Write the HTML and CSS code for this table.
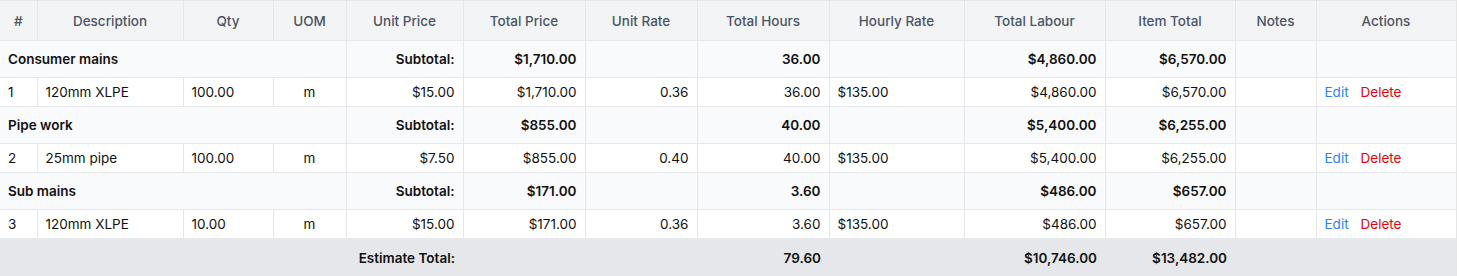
FILE: index.html
```html
<!DOCTYPE html>
<html>
<head>
<meta charset="utf-8">
<link rel="stylesheet" href="styles.css">
</head>
<body>
<div class="wrap">
<table class="est">
<colgroup>
<col class="c1"><col class="c2"><col class="c3"><col class="c4"><col class="c5"><col class="c6"><col class="c7"><col class="c8"><col class="c9"><col class="c10"><col class="c11"><col class="c12"><col class="c13">
</colgroup>
<thead>
<tr>
<th>#</th><th>Description</th><th>Qty</th><th>UOM</th><th>Unit Price</th><th>Total Price</th><th>Unit Rate</th><th>Total Hours</th><th>Hourly Rate</th><th>Total Labour</th><th>Item Total</th><th>Notes</th><th>Actions</th>
</tr>
</thead>
<tbody>
<tr class="group">
<td colspan="4">Consumer mains</td><td class="r">Subtotal:</td><td class="r">$1,710.00</td><td></td><td class="r">36.00</td><td></td><td class="r">$4,860.00</td><td class="r">$6,570.00</td><td></td><td></td>
</tr>
<tr class="item">
<td>1</td><td>120mm XLPE</td><td>100.00</td><td class="c">m</td><td class="r">$15.00</td><td class="r">$1,710.00</td><td class="r">0.36</td><td class="r">36.00</td><td>$135.00</td><td class="r">$4,860.00</td><td class="r">$6,570.00</td><td></td><td class="acts"><span class="edit">Edit</span><span class="del">Delete</span></td>
</tr>
<tr class="group">
<td colspan="4">Pipe work</td><td class="r">Subtotal:</td><td class="r">$855.00</td><td></td><td class="r">40.00</td><td></td><td class="r">$5,400.00</td><td class="r">$6,255.00</td><td></td><td></td>
</tr>
<tr class="item">
<td>2</td><td>25mm pipe</td><td>100.00</td><td class="c">m</td><td class="r">$7.50</td><td class="r">$855.00</td><td class="r">0.40</td><td class="r">40.00</td><td>$135.00</td><td class="r">$5,400.00</td><td class="r">$6,255.00</td><td></td><td class="acts"><span class="edit">Edit</span><span class="del">Delete</span></td>
</tr>
<tr class="group">
<td colspan="4">Sub mains</td><td class="r">Subtotal:</td><td class="r">$171.00</td><td></td><td class="r">3.60</td><td></td><td class="r">$486.00</td><td class="r">$657.00</td><td></td><td></td>
</tr>
<tr class="item">
<td>3</td><td>120mm XLPE</td><td>10.00</td><td class="c">m</td><td class="r">$15.00</td><td class="r">$171.00</td><td class="r">0.36</td><td class="r">3.60</td><td>$135.00</td><td class="r">$486.00</td><td class="r">$657.00</td><td></td><td class="acts"><span class="edit">Edit</span><span class="del">Delete</span></td>
</tr>
</tbody>
<tfoot>
<tr>
<td colspan="5" class="r">Estimate Total:</td><td></td><td></td><td class="r">79.60</td><td></td><td class="r">$10,746.00</td><td class="r">$13,482.00</td><td></td><td></td>
</tr>
</tfoot>
</table>
</div>
</body>
</html>
```
FILE: styles.css
```css
html, body {
  margin: 0;
  padding: 0;
  background: #ffffff;
}
body {
  font-family: "Inter", "Liberation Sans", sans-serif;
  font-size: 13.5px;
  color: #111111;
}
.wrap {
  width: 1456px;
}
.est {
  width: 1456px;
  table-layout: fixed;
  border-collapse: collapse;
  border-right: 1px solid #e5e7eb;
  border-top: 1px solid #e5e7eb;
}
.c1 { width: 37px; }
.c2 { width: 146px; }
.c3 { width: 90px; }
.c4 { width: 73px; }
.c5 { width: 117px; }
.c6 { width: 122px; }
.c7 { width: 112px; }
.c8 { width: 132px; }
.c9 { width: 135px; }
.c10 { width: 141px; }
.c11 { width: 130px; }
.c12 { width: 81px; }
.c13 { width: 140px; }
th {
  background: #f3f4f6;
  color: #4a5565;
  font-weight: 500;
  text-align: center;
  height: 40px;
  padding: 0 8px;
  border: 1px solid #e5e7eb;
  border-top: none;
  box-sizing: border-box;
}
th:first-child, td:first-child { border-left: none; }
td {
  padding: 0 8px;
  border: 1px solid #e5e7eb;
  white-space: nowrap;
  overflow: hidden;
}
.group td {
  background: #f9fafb;
  font-weight: 600;
  height: 36px;
}
.item td {
  background: #ffffff;
  height: 28px;
}
.r { text-align: right; }
.c { text-align: center; }
.acts span { margin-right: 12px; }
.edit { color: #2b7fff; }
.del { color: #e7000b; }
tfoot td {
  background: #e5e7eb;
  font-weight: 600;
  height: 38px;
  border: none;
}
```
